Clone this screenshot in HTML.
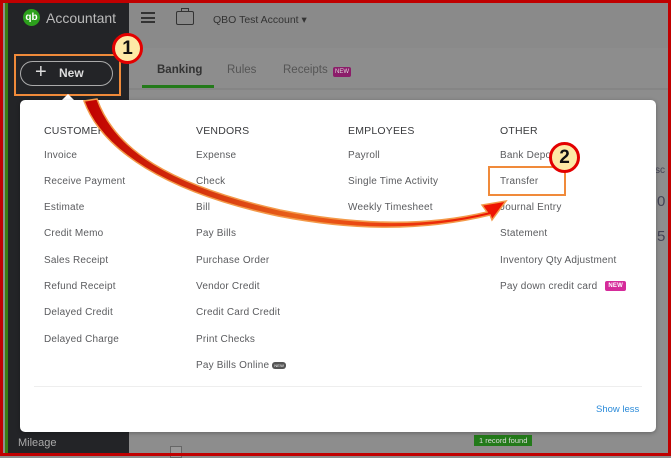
<!DOCTYPE html>
<html><head><meta charset="utf-8"><style>
*{margin:0;padding:0;box-sizing:border-box}
body{width:671px;height:456px;overflow:hidden;background:#8d8d8d;font-family:"Liberation Sans",sans-serif;position:relative}
.abs{position:absolute}
.side{left:8px;top:0;width:121px;height:456px;background:#232427}
.menu{left:20px;top:100px;width:636px;height:332px;background:#fff;border-radius:5px;box-shadow:0 1px 4px rgba(0,0,0,.3)}
.h{position:absolute;font-size:10.5px;color:#393a3d;letter-spacing:.2px}
.i{position:absolute;font-size:10px;color:#5a5b5e;letter-spacing:.2px}
.badge{display:inline-block;background:#d52b9a;color:#fff;font-size:6px;font-weight:bold;padding:2px 3px;border-radius:2px;vertical-align:middle;margin-left:8px}
.circ{width:31px;height:31px;border-radius:50%;background:#fde9a6;border:3px solid #e30000;font-weight:bold;font-size:19px;text-align:center;line-height:25px;color:#111}
</style></head><body>
<div class="abs side"></div>
<div class="abs" style="left:129px;top:0;width:542px;height:48px;background:#8a8a8a"></div>
<div class="abs" style="left:129px;top:88px;width:542px;height:2px;background:#858585"></div>
<div class="abs" style="left:23px;top:9px;width:17px;height:17px;border-radius:50%;background:#2ca01c;color:#fff;font-size:10px;font-weight:bold;text-align:center;line-height:17px">qb</div>
<div class="abs" style="left:46px;top:10px;font-size:14px;color:#bbb">Accountant</div>
<div class="abs" style="left:141px;top:12px;width:14px;height:11px;border-top:2px solid #333;border-bottom:2px solid #333"><div style="margin-top:2.5px;height:2px;background:#333"></div></div>
<div class="abs" style="left:176px;top:11px;width:18px;height:14px;border:1.5px solid #333;border-radius:2px"></div>
<div class="abs" style="left:181px;top:8px;width:8px;height:4px;border:1.5px solid #333;border-bottom:none"></div>
<div class="abs" style="left:213px;top:14px;font-size:10.5px;color:#333">QBO Test Account ▾</div>
<div class="abs" style="left:14px;top:54px;width:107px;height:42px;border:2.5px solid #f08a3a"></div>
<div class="abs" style="left:20px;top:61px;width:93px;height:25px;border:1.5px solid #aaa;border-radius:13px;color:#ddd;font-size:12px;font-weight:bold;line-height:22px;padding-left:38px"><span style="position:absolute;left:14px;top:-1px;font-weight:normal;font-size:20px">+</span>New</div>
<div class="abs circ" style="left:112px;top:33px">1</div>
<div class="abs" style="left:157px;top:64px;font-size:11.5px;color:#333;font-weight:bold">Banking</div>
<div class="abs" style="left:142px;top:85px;width:72px;height:3px;background:#237a1a"></div>
<div class="abs" style="left:227px;top:64px;font-size:11.5px;color:#555">Rules</div>
<div class="abs" style="left:283px;top:64px;font-size:11.5px;color:#555">Receipts</div>
<div class="abs" style="left:333px;top:67px;background:#8c1d6a;color:#ddd;font-size:6px;padding:2px;border-radius:2px">NEW</div>
<div class="abs" style="left:62px;top:94px;width:0;height:0;border:6px solid transparent;border-bottom-color:#fff;border-top:none"></div>
<div class="abs" style="left:18px;top:437px;font-size:11px;color:#aaa">Mileage</div>
<div class="abs" style="left:474px;top:435px;background:#237a1a;color:#ddd;font-size:7.5px;padding:1px 5px">1 record found</div>
<div class="abs" style="left:170px;top:446px;width:12px;height:12px;border:1px solid #666;background:#999"></div>
<div class="abs" style="left:655px;top:165px;font-size:10px;color:#445">sc</div>
<div class="abs" style="left:657px;top:193px;font-size:15px;color:#445">0</div>
<div class="abs" style="left:657px;top:228px;font-size:15px;color:#445">5</div>

<div class="abs menu">
<div class="h" style="left:24px;top:25px">CUSTOMERS</div>
<div class="h" style="left:176px;top:25px">VENDORS</div>
<div class="h" style="left:328px;top:25px">EMPLOYEES</div>
<div class="h" style="left:480px;top:25px">OTHER</div>
<div class="i" style="left:24px;top:50px">Invoice</div>
<div class="i" style="left:24px;top:76px">Receive Payment</div>
<div class="i" style="left:24px;top:102px">Estimate</div>
<div class="i" style="left:24px;top:128px">Credit Memo</div>
<div class="i" style="left:24px;top:155px">Sales Receipt</div>
<div class="i" style="left:24px;top:181px">Refund Receipt</div>
<div class="i" style="left:24px;top:207px">Delayed Credit</div>
<div class="i" style="left:24px;top:234px">Delayed Charge</div>
<div class="i" style="left:176px;top:50px">Expense</div>
<div class="i" style="left:176px;top:76px">Check</div>
<div class="i" style="left:176px;top:102px">Bill</div>
<div class="i" style="left:176px;top:128px">Pay Bills</div>
<div class="i" style="left:176px;top:155px">Purchase Order</div>
<div class="i" style="left:176px;top:181px">Vendor Credit</div>
<div class="i" style="left:176px;top:207px">Credit Card Credit</div>
<div class="i" style="left:176px;top:234px">Print Checks</div>
<div class="i" style="left:176px;top:260px">Pay Bills Online <span style="display:inline-block;background:#555;color:#fff;font-size:4px;padding:1px 2px;border-radius:3px;vertical-align:middle">NEW</span></div>
<div class="i" style="left:328px;top:50px">Payroll</div>
<div class="i" style="left:328px;top:76px">Single Time Activity</div>
<div class="i" style="left:328px;top:102px">Weekly Timesheet</div>
<div class="i" style="left:480px;top:50px">Bank Deposit</div>
<div class="i" style="left:480px;top:76px">Transfer</div>
<div class="i" style="left:480px;top:102px">Journal Entry</div>
<div class="i" style="left:480px;top:128px">Statement</div>
<div class="i" style="left:480px;top:155px">Inventory Qty Adjustment</div>
<div class="i" style="left:480px;top:181px">Pay down credit card<span class="badge">NEW</span></div>
<div class="abs" style="left:14px;top:286px;width:608px;height:1px;background:#eee"></div>
<div class="abs" style="left:576px;top:304px;font-size:9.5px;color:#2a8ad9">Show less</div>
</div>
<svg class="abs" style="left:0;top:0" width="671" height="456">
<defs><linearGradient id="g" x1="0" x2="1"><stop offset="0" stop-color="#c00000"/><stop offset=".5" stop-color="#e8601a"/><stop offset="1" stop-color="#ee1000"/></linearGradient></defs>
<path d="M84 101 L97 99 C115 150 170 185 280 210 C350 224 420 228 487 212 L482 205 L506 201 L492 220 L490 215 C420 232 350 230 278 216 C165 192 102 150 84 101 Z" fill="url(#g)" stroke="#f39a4a" stroke-width="1.5"/>
</svg>
<div class="abs" style="left:488px;top:166px;width:78px;height:30px;border:2.5px solid #f08a3a"></div>
<div class="abs circ" style="left:549px;top:142px">2</div>
<div class="abs" style="left:5px;top:0;width:3px;height:456px;background:#3a7d12"></div>
<div class="abs" style="left:0;top:0;width:671px;height:456px;border:3px solid #c00000"></div>
</body></html>
